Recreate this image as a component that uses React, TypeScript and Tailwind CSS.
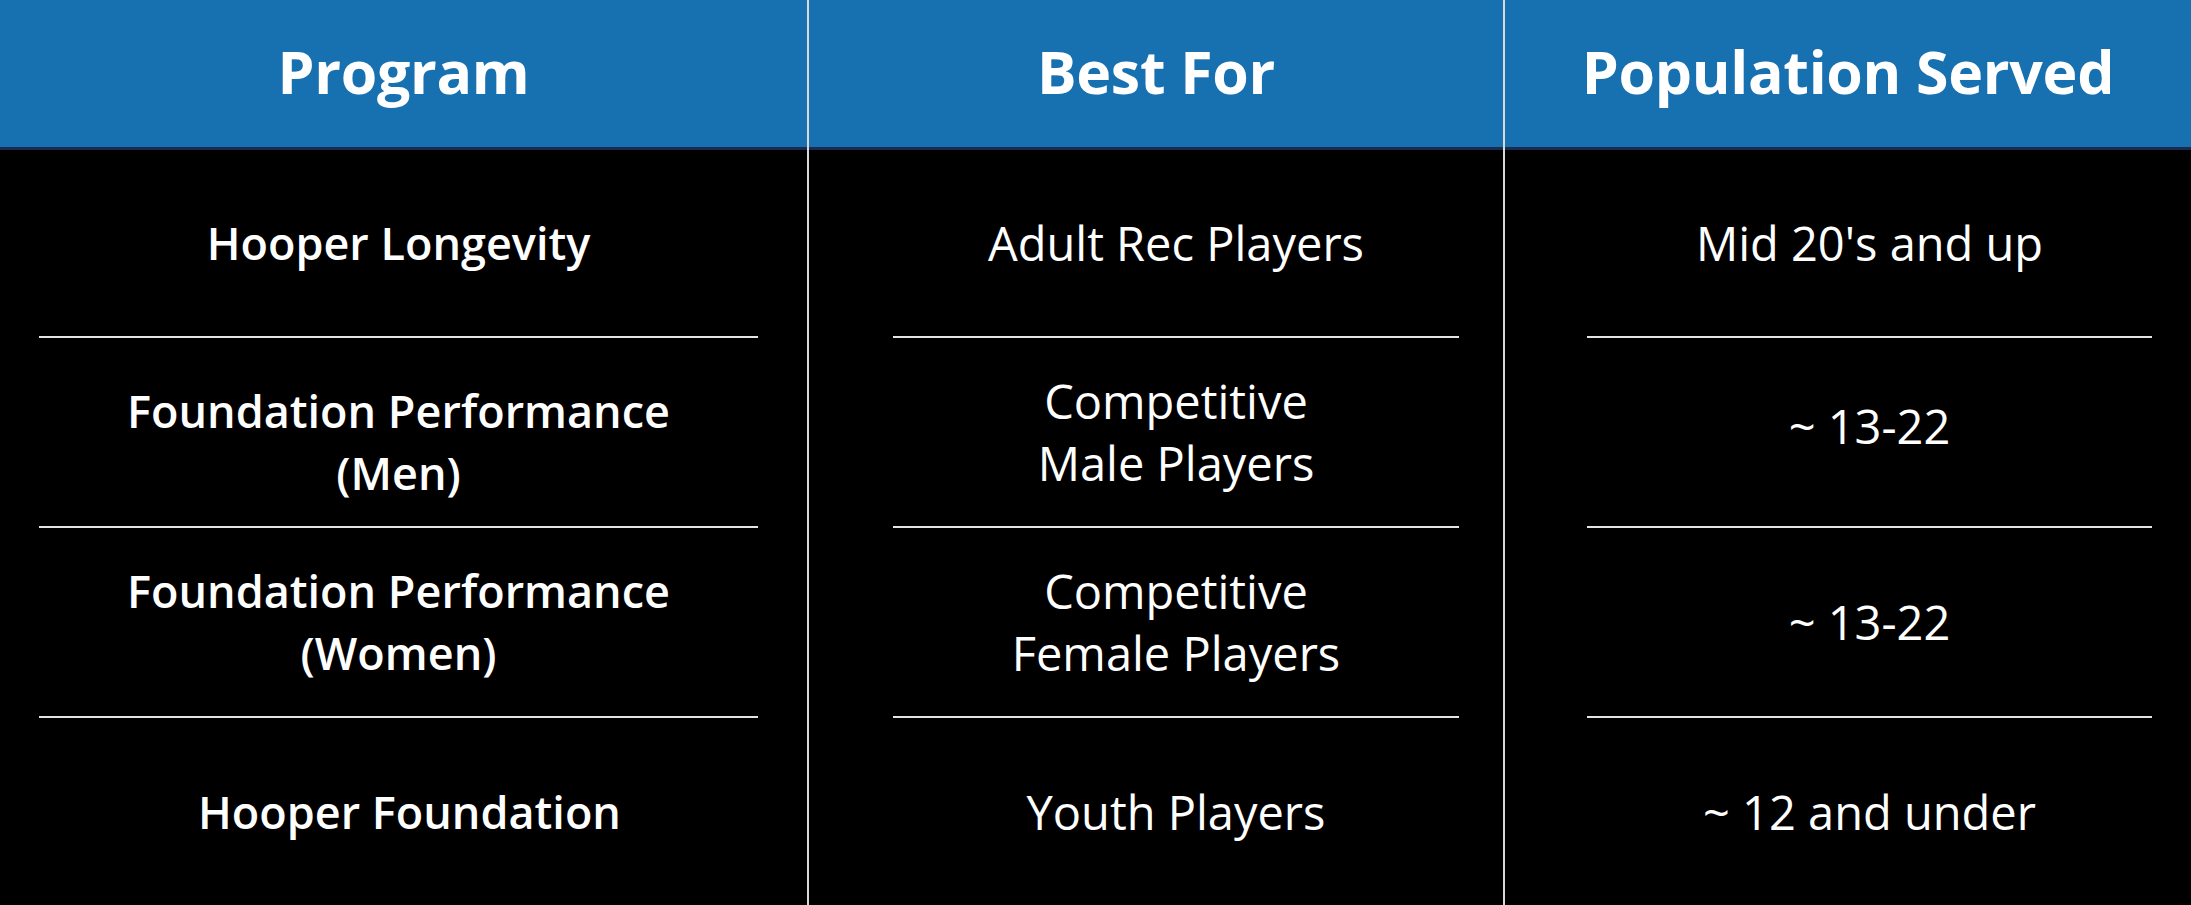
import React from "react";

type Cell = { lines: string[]; extra?: string };

const col1: Cell[] = [
  { lines: ["Hooper Longevity"] },
  { lines: ["Foundation Performance", "(Men)"], extra: "pt-[20px]" },
  { lines: ["Foundation Performance", "(Women)"] },
  { lines: ["Hooper Foundation"], extra: "pl-[22px]" },
];
const col2: Cell[] = [
  { lines: ["Adult Rec Players"] },
  { lines: ["Competitive", "Male Players"] },
  { lines: ["Competitive", "Female Players"] },
  { lines: ["Youth Players"] },
];
const col3: Cell[] = [
  { lines: ["Mid 20's and up"] },
  { lines: ["~ 13-22"], extra: "pb-[12px]" },
  { lines: ["~ 13-22"] },
  { lines: ["~ 12 and under"] },
];

function Column({
  title,
  cells,
  width,
  inset,
  textCls,
}: {
  title: string;
  cells: Cell[];
  width: string;
  inset: string;
  textCls: string;
}) {
  const heights = ["h-[186px]", "h-[188px]", "h-[188px]", "flex-1"];
  return (
    <div className={`${width} flex h-full flex-col`}>
      <div className="flex h-[147px] items-center justify-center bg-[#1770b0] pb-[5px]">
        <span className="text-[59px] font-bold leading-none tracking-[-0.3px] text-white">{title}</span>
      </div>
      <div className="h-[3px] bg-[#1c2a52]" />
      <div className={`flex flex-1 flex-col ${inset}`}>
        {cells.map((c, i) => (
          <React.Fragment key={i}>
            <div
              className={`${heights[i]} flex flex-col items-center justify-center text-center ${textCls} ${c.extra ?? ""} leading-[62px] text-white`}
            >
              {c.lines.map((l, j) => (
                <span key={j} className="whitespace-nowrap">
                  {l}
                </span>
              ))}
            </div>
            {i < 3 && <div className="h-[2px] bg-[#e4e4e4]" />}
          </React.Fragment>
        ))}
      </div>
    </div>
  );
}

export default function App() {
  return (
    <div
      className="flex h-[905px] w-[2191px] bg-black"
      style={{ fontFamily: '"Open Sans", "Noto Sans", sans-serif' }}
    >
      <Column
        title="Program"
        cells={col1}
        width="w-[807px]"
        inset="pl-[39px] pr-[49px]"
        textCls="font-semibold text-[45px]"
      />
      <div className="w-[2px] bg-[#d8d8d8]" />
      <Column
        title="Best For"
        cells={col2}
        width="w-[694px]"
        inset="pl-[84px] pr-[44px]"
        textCls="font-normal text-[47px]"
      />
      <div className="w-[2px] bg-[#d8d8d8]" />
      <Column
        title="Population Served"
        cells={col3}
        width="flex-1"
        inset="pl-[82px] pr-[39px]"
        textCls="font-normal text-[47px]"
      />
    </div>
  );
}
